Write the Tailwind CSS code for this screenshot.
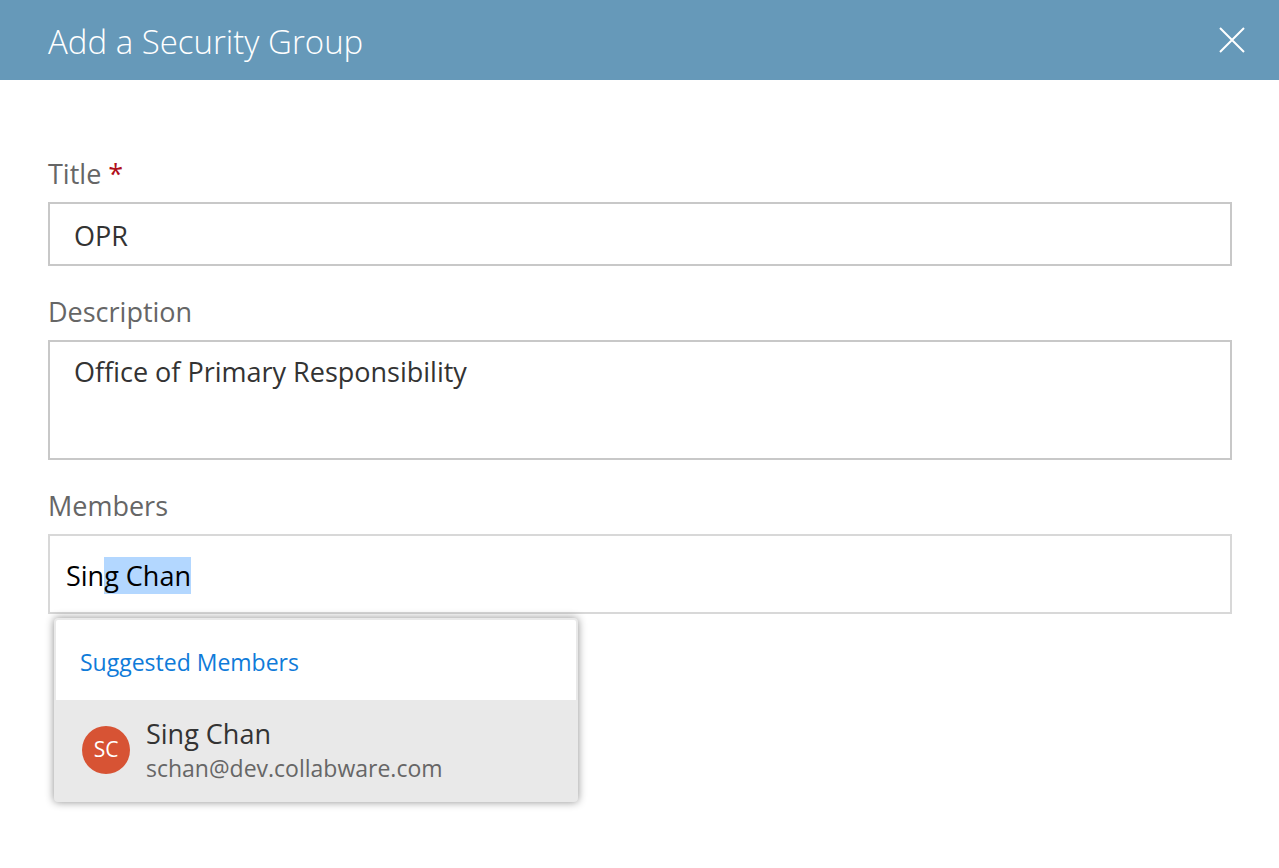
<!DOCTYPE html>
<html lang="en">
<head>
    <meta charset="UTF-8">
    <meta name="viewport" content="width=device-width, initial-scale=1.0">
    <title>Add a Security Group</title>
    <script src="https://cdn.jsdelivr.net/npm/@tailwindcss/browser@4"></script>
</head>
<body class="bg-white min-h-screen font-['Segoe_UI','Open_Sans','Noto_Sans',sans-serif] text-[27px] text-[#333333]">
    <!-- Panel header -->
    <header class="flex h-20 items-center justify-between bg-[#6699b9] pl-12 pr-[31px] text-white">
        <h1 class="pt-1 text-[33px] leading-10 font-light">Add a Security Group</h1>
        <button type="button" aria-label="Close" class="flex size-8 items-center justify-center">
            <svg class="size-8" viewBox="0 0 32 32" fill="none" stroke="currentColor" stroke-width="2">
                <path d="M4 4l24 24M28 4L4 28" />
            </svg>
        </button>
    </header>

    <!-- Group form -->
    <form class="flex flex-col gap-[26px] pl-12 pr-[47px] pt-[74px] pb-12">
        <div class="flex flex-col gap-2">
            <label for="title" class="leading-10 text-[#666666]">Title <span class="text-[#b00e1a]">*</span></label>
            <input type="text" id="title" value="OPR" class="h-16 w-full border-2 border-[#c8c8c8] px-6 pt-0.5 focus:outline-none">
        </div>

        <div class="flex flex-col gap-2">
            <label for="description" class="leading-10 text-[#666666]">Description</label>
            <textarea id="description" class="block h-[120px] w-full resize-none border-2 border-[#c8c8c8] px-6 py-3 leading-9 focus:outline-none">Office of Primary Responsibility</textarea>
        </div>

        <div class="flex flex-col gap-2">
            <label for="members" class="leading-10 text-[#666666]">Members</label>
            <div class="relative">
                <input type="text" id="members" value="Sing Chan" autocomplete="off" class="h-20 w-full border-2 border-[#d8d8d8] px-4 pt-0.5 text-black selection:bg-[#b3d7ff] selection:text-black focus:outline-none">

                <!-- Suggestions -->
                <div class="absolute top-full left-1.5 mt-1 w-[524px] rounded-sm border-2 border-[#e9e9e9] bg-white shadow-[0_0_8px_rgba(0,0,0,0.45)]">
                    <div class="flex h-20 items-center px-6 pt-1 text-[23px] text-[#0f7bd9]">Suggested Members</div>
                    <button type="button" class="flex h-[100px] w-full items-center gap-4 bg-[#e9e9e9] px-[26px] text-left">
                        <span class="flex size-12 items-center justify-center rounded-full bg-[#d75334] text-[21px] text-white">SC</span>
                        <span class="flex flex-col">
                            <span class="leading-9">Sing Chan</span>
                            <span class="text-[23px] leading-8 text-[#666666]">schan@dev.collabware.com</span>
                        </span>
                    </button>
                </div>
            </div>
        </div>
    </form>

    <script>
        // Highlight the autocompleted part of the name
        const members = document.getElementById('members');
        members.focus();
        members.setSelectionRange(3, members.value.length);
    </script>
</body>
</html>
